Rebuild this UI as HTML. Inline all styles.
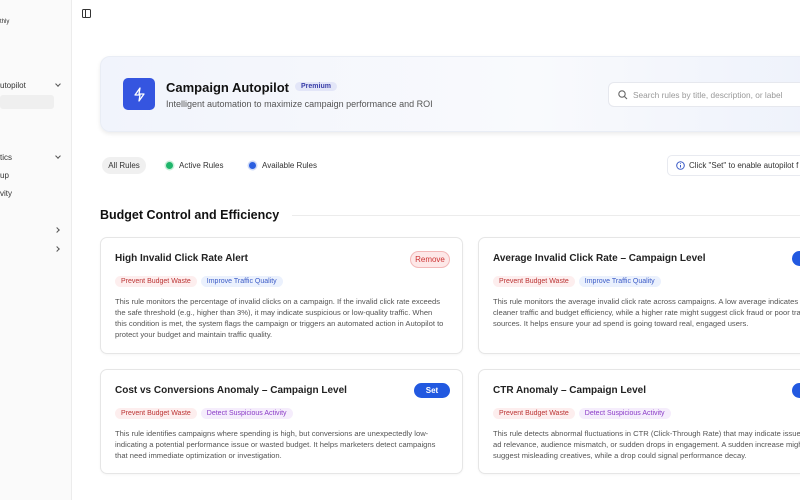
<!DOCTYPE html>
<html><head><style>
*{box-sizing:border-box;margin:0;padding:0}
body{width:800px;height:500px;overflow:hidden;background:#fff;font-family:"Liberation Sans",sans-serif;color:#111;position:relative}
.sb{position:absolute;left:0;top:0;width:72px;height:500px;background:#fafafa;border-right:1px solid #ececec}
.sb div{position:absolute;font-size:8px;color:#333}
.chev{position:absolute;width:4px;height:4px;border-right:1.1px solid #555;border-bottom:1.1px solid #555}
.hero{position:absolute;left:100px;top:56px;width:720px;height:76px;border-radius:10px;background:linear-gradient(90deg,#f1f4fc,#f9fafd 60%,#eef2fb);box-shadow:0 2px 4px rgba(0,0,0,.08);border:1px solid #e9edf5}
.ic{position:absolute;left:123px;top:78px;width:32px;height:32px;border-radius:5px;background:#3555e0}
.title{position:absolute;left:166px;top:80px;font-size:13px;font-weight:bold}
.prem{position:absolute;left:295px;top:82px;padding:1px 6px;font-size:7px;font-weight:bold;color:#3a3fa8;background:#e3e6f8;border-radius:6px}
.sub{position:absolute;left:166px;top:99px;font-size:9px;color:#555}
.search{position:absolute;left:608px;top:82px;width:220px;height:25px;border:1px solid #e6e8ee;border-radius:6px;background:#fff;font-size:8.3px;color:#999;padding:7px 0 0 24px}
.pill{position:absolute;top:157px;font-size:8px;color:#333;height:17px;line-height:17px}
.dot{display:inline-block;width:7px;height:7px;border-radius:50%;margin-right:6px;vertical-align:-1px}
.info{position:absolute;left:667px;top:155px;width:160px;height:21px;border:1px solid #e8eaf0;border-radius:5px;font-size:8px;color:#333;padding:5px 0 0 21px}
h2{position:absolute;left:100px;top:208px;font-size:12.5px;font-weight:bold}
.line{position:absolute;left:292px;top:215px;width:510px;height:1px;background:#ececec}
.card{position:absolute;width:363px;border:1px solid #e6e6e6;border-radius:7px;box-shadow:0 1px 2px rgba(0,0,0,.04);background:#fff}
.card h3{position:absolute;left:14px;top:15px;font-size:10px;font-weight:bold;color:#222}
.tags{position:absolute;left:14px;top:38px;font-size:7px}
.tags span{display:inline-block;padding:2px 6px;border-radius:7px;margin-right:4px}
.r{background:#fdeeee;color:#b33}.b{background:#ebf1fd;color:#3b5bc7}.p{background:#f5edfc;color:#8a3bc7}
.card p{position:absolute;left:14px;top:58px;width:330px;font-size:7.6px;line-height:11px;color:#555}
.btn{position:absolute;top:13px;font-size:8px;padding:3px 0;text-align:center;border-radius:9px}
</style></head><body>
<div class="sb">
<div style="left:0;top:19px;font-size:6px">thly</div>
<div style="left:0;top:81px">utopilot</div><span class="chev" style="left:56px;top:82px;transform:rotate(45deg)"></span>
<div style="left:0;top:95px;width:54px;height:14px;background:#efefef;border-radius:3px"></div>
<div style="left:0;top:153px">tics</div><span class="chev" style="left:56px;top:154px;transform:rotate(45deg)"></span>
<div style="left:0;top:171px">up</div>
<div style="left:0;top:189px">vity</div>
<span class="chev" style="left:55px;top:228px;transform:rotate(-45deg)"></span>
<span class="chev" style="left:55px;top:247px;transform:rotate(-45deg)"></span>
</div>
<svg style="position:absolute;left:82px;top:9px" width="9" height="9" viewBox="0 0 9 9"><rect x=".5" y=".5" width="8" height="8" rx="1" fill="none" stroke="#333"/><line x1="3.5" y1="0" x2="3.5" y2="9" stroke="#333"/></svg>
<div class="hero"></div>
<div class="ic"><svg width="32" height="32" viewBox="0 0 32 32"><path d="M17 10l-5 7h5l-1 6 5-7h-5z" fill="none" stroke="#fff" stroke-width="1.3" stroke-linejoin="round"/></svg></div>
<div class="title">Campaign Autopilot</div>
<div class="prem">Premium</div>
<div class="sub">Intelligent automation to maximize campaign performance and ROI</div>
<div class="search"><svg style="position:absolute;left:9px;top:7px" width="10" height="10" viewBox="0 0 10 10"><circle cx="4" cy="4" r="3.2" fill="none" stroke="#666" stroke-width="1.1"/><line x1="6.5" y1="6.5" x2="9" y2="9" stroke="#666" stroke-width="1.1"/></svg>Search rules by title, description, or label</div>
<div class="pill" style="left:102px;width:44px;background:#f0f0f0;border-radius:9px;text-align:center">All Rules</div>
<div class="pill" style="left:166px"><span class="dot" style="background:#1fb56b;box-shadow:0 0 0 1.5px #c9efd9"></span>Active Rules</div>
<div class="pill" style="left:249px"><span class="dot" style="background:#2a5ee0;box-shadow:0 0 0 1.5px #cfdaf7"></span>Available Rules</div>
<div class="info"><svg style="position:absolute;left:8px;top:5px" width="9" height="9" viewBox="0 0 9 9"><circle cx="4.5" cy="4.5" r="3.8" fill="none" stroke="#3b5bc7"/><line x1="4.5" y1="4" x2="4.5" y2="6.5" stroke="#3b5bc7"/><circle cx="4.5" cy="2.6" r=".5" fill="#3b5bc7"/></svg>Click "Set" to enable autopilot f</div>
<h2>Budget Control and Efficiency</h2><div class="line"></div>

<div class="card" style="left:100px;top:237px;height:117px"><h3>High Invalid Click Rate Alert</h3>
<div class="btn" style="left:309px;width:40px;background:#fde8e8;color:#c33;border:1px solid #f3b8b8">Remove</div>
<div class="tags"><span class="r">Prevent Budget Waste</span><span class="b">Improve Traffic Quality</span></div>
<p>This rule monitors the percentage of invalid clicks on a campaign. If the invalid click rate exceeds the safe threshold (e.g., higher than 3%), it may indicate suspicious or low-quality traffic. When this condition is met, the system flags the campaign or triggers an automated action in Autopilot to protect your budget and maintain traffic quality.</p></div>

<div class="card" style="left:100px;top:369px;height:105px"><h3>Cost vs Conversions Anomaly – Campaign Level</h3>
<div class="btn" style="left:313px;width:36px;background:#2259e0;color:#fff;font-weight:bold">Set</div>
<div class="tags"><span class="r">Prevent Budget Waste</span><span class="p">Detect Suspicious Activity</span></div>
<p>This rule identifies campaigns where spending is high, but conversions are unexpectedly low-indicating a potential performance issue or wasted budget. It helps marketers detect campaigns that need immediate optimization or investigation.</p></div>

<div class="card" style="left:478px;top:237px;height:117px;width:360px"><h3>Average Invalid Click Rate – Campaign Level</h3>
<div class="btn" style="left:313px;width:36px;background:#2259e0;color:#fff">Set</div>
<div class="tags"><span class="r">Prevent Budget Waste</span><span class="b">Improve Traffic Quality</span></div>
<p>This rule monitors the average invalid click rate across campaigns. A low average indicates cleaner traffic and budget efficiency, while a higher rate might suggest click fraud or poor traffic sources. It helps ensure your ad spend is going toward real, engaged users.</p></div>

<div class="card" style="left:478px;top:369px;height:105px;width:360px"><h3>CTR Anomaly – Campaign Level</h3>
<div class="btn" style="left:313px;width:36px;background:#2259e0;color:#fff">Set</div>
<div class="tags"><span class="r">Prevent Budget Waste</span><span class="p">Detect Suspicious Activity</span></div>
<p>This rule detects abnormal fluctuations in CTR (Click-Through Rate) that may indicate issues with ad relevance, audience mismatch, or sudden drops in engagement. A sudden increase might suggest misleading creatives, while a drop could signal performance decay.</p></div>
</body></html>
